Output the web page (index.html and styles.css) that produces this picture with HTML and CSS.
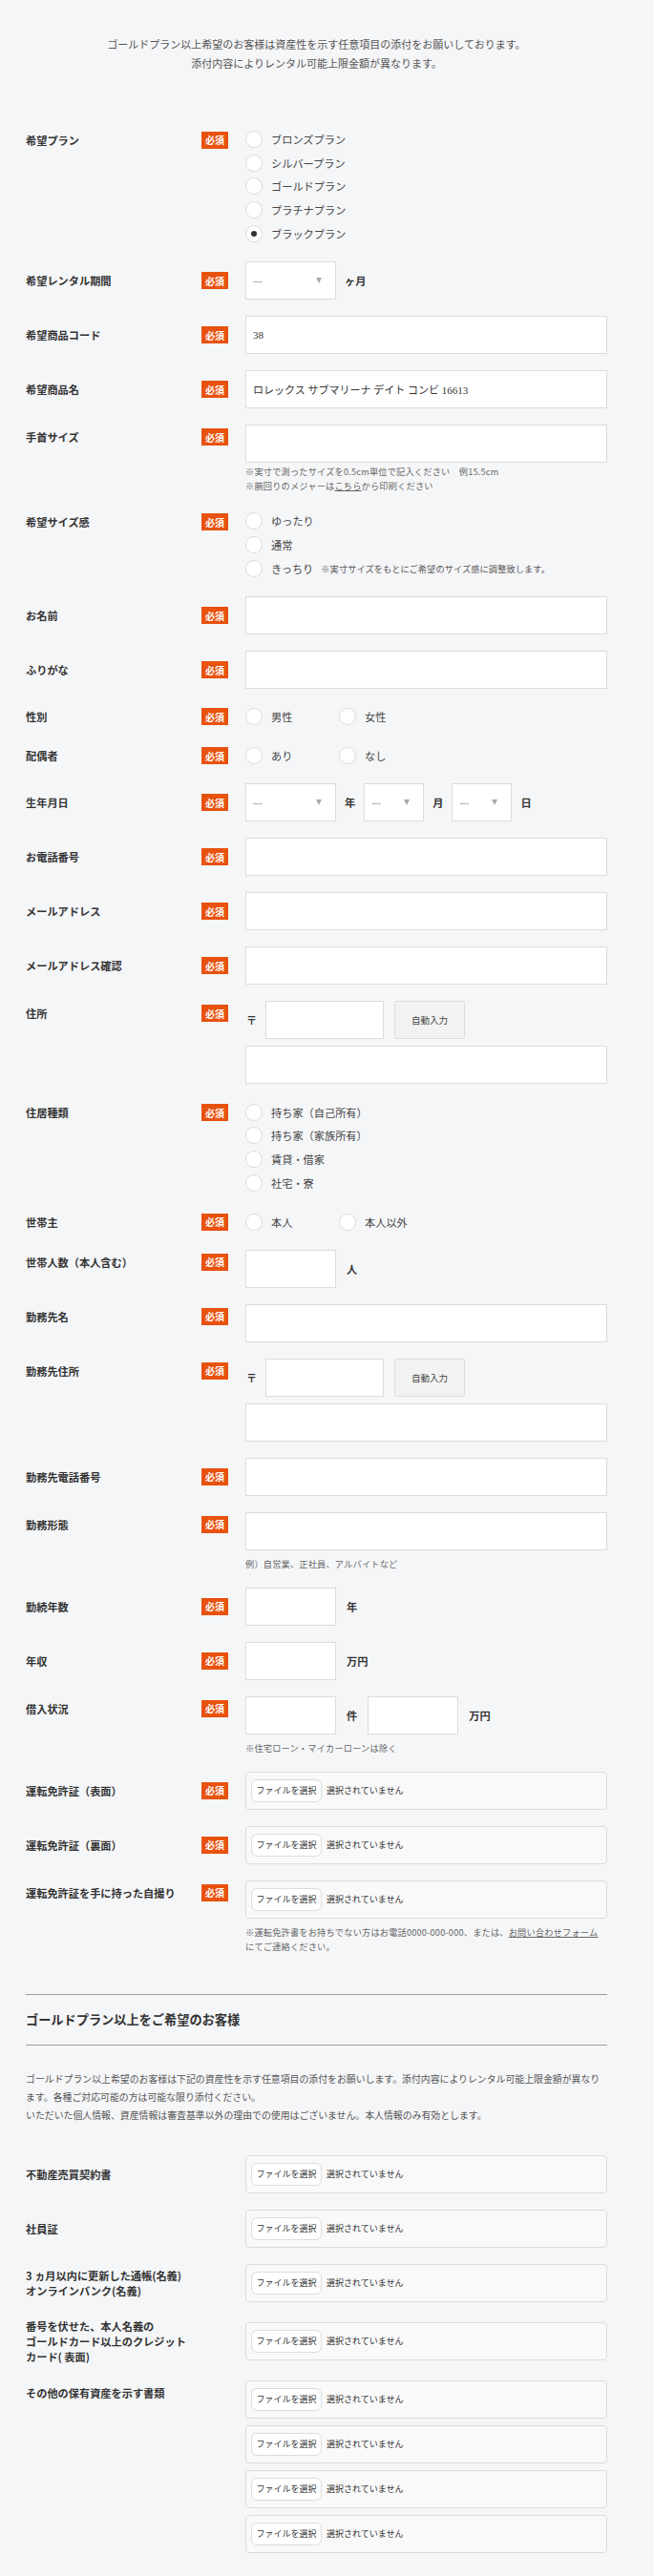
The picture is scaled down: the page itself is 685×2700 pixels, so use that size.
FILE: index.html
```html
<!DOCTYPE html>
<html lang="ja">
<head>
<meta charset="utf-8">
<title>申込フォーム</title>
<link rel="stylesheet" href="styles.css">
</head>
<body>
<div class="page">
  <p class="intro">ゴールドプラン以上希望のお客様は資産性を示す任意項目の添付をお願いしております。<br>添付内容によりレンタル可能上限金額が異なります。</p>

  <form class="form">
    <div class="row row--top">
      <div class="label">希望プラン</div>
      <span class="req">必須</span>
      <div class="radios">
        <label class="radio"><span class="circle"></span>ブロンズプラン</label>
        <label class="radio"><span class="circle"></span>シルバープラン</label>
        <label class="radio"><span class="circle"></span>ゴールドプラン</label>
        <label class="radio"><span class="circle"></span>プラチナプラン</label>
        <label class="radio"><span class="circle circle--on"></span>ブラックプラン</label>
      </div>
    </div>

    <div class="row">
      <div class="label">希望レンタル期間</div>
      <span class="req">必須</span>
      <div class="inline">
        <span class="select select--l"><select><option>---</option></select></span>
        <span class="unit">ヶ月</span>
      </div>
    </div>

    <div class="row">
      <div class="label">希望商品コード</div>
      <span class="req">必須</span>
      <input class="input" type="text" value="38">
    </div>

    <div class="row">
      <div class="label">希望商品名</div>
      <span class="req">必須</span>
      <input class="input" type="text" value="ロレックス サブマリーナ デイト コンビ 16613">
    </div>

    <div class="row row--top">
      <div class="label">手首サイズ</div>
      <span class="req">必須</span>
      <div class="field">
        <input class="input" type="text">
        <p class="note note--tight">※実寸で測ったサイズを0.5cm単位で記入ください　例15.5cm<br>※腕回りのメジャーは<a class="link" href="#">こちら</a>から印刷ください</p>
      </div>
    </div>

    <div class="row row--top">
      <div class="label">希望サイズ感</div>
      <span class="req">必須</span>
      <div class="radios">
        <label class="radio"><span class="circle"></span>ゆったり</label>
        <label class="radio"><span class="circle"></span>通常</label>
        <label class="radio"><span class="circle"></span>きっちり<span class="radio-note">※実寸サイズをもとにご希望のサイズ感に調整致します。</span></label>
      </div>
    </div>

    <div class="row">
      <div class="label">お名前</div>
      <span class="req">必須</span>
      <input class="input" type="text">
    </div>

    <div class="row">
      <div class="label">ふりがな</div>
      <span class="req">必須</span>
      <input class="input" type="text">
    </div>

    <div class="row">
      <div class="label">性別</div>
      <span class="req">必須</span>
      <div class="radios radios--inline">
        <label class="radio"><span class="circle"></span>男性</label>
        <label class="radio"><span class="circle"></span>女性</label>
      </div>
    </div>

    <div class="row">
      <div class="label">配偶者</div>
      <span class="req">必須</span>
      <div class="radios radios--inline">
        <label class="radio"><span class="circle"></span>あり</label>
        <label class="radio"><span class="circle"></span>なし</label>
      </div>
    </div>

    <div class="row">
      <div class="label">生年月日</div>
      <span class="req">必須</span>
      <div class="inline inline--date">
        <span class="select select--l"><select><option>---</option></select></span>
        <span class="unit">年</span>
        <span class="select select--s"><select><option>---</option></select></span>
        <span class="unit">月</span>
        <span class="select select--s"><select><option>---</option></select></span>
        <span class="unit">日</span>
      </div>
    </div>

    <div class="row">
      <div class="label">お電話番号</div>
      <span class="req">必須</span>
      <input class="input" type="text">
    </div>

    <div class="row">
      <div class="label">メールアドレス</div>
      <span class="req">必須</span>
      <input class="input" type="text">
    </div>

    <div class="row">
      <div class="label">メールアドレス確認</div>
      <span class="req">必須</span>
      <input class="input" type="text">
    </div>

    <div class="row row--top">
      <div class="label">住所</div>
      <span class="req">必須</span>
      <div class="field field--stack">
        <div class="postal">
          <span class="postal-mark">〒</span>
          <input class="input input--zip" type="text">
          <button class="auto-btn" type="button">自動入力</button>
        </div>
        <input class="input" type="text">
      </div>
    </div>

    <div class="row row--top">
      <div class="label">住居種類</div>
      <span class="req">必須</span>
      <div class="radios">
        <label class="radio"><span class="circle"></span>持ち家（自己所有）</label>
        <label class="radio"><span class="circle"></span>持ち家（家族所有）</label>
        <label class="radio"><span class="circle"></span>賃貸・借家</label>
        <label class="radio"><span class="circle"></span>社宅・寮</label>
      </div>
    </div>

    <div class="row">
      <div class="label">世帯主</div>
      <span class="req">必須</span>
      <div class="radios radios--inline">
        <label class="radio"><span class="circle"></span>本人</label>
        <label class="radio"><span class="circle"></span>本人以外</label>
      </div>
    </div>

    <div class="row row--top">
      <div class="label">世帯人数（本人含む）</div>
      <span class="req">必須</span>
      <div class="inline">
        <input class="input input--s" type="text">
        <span class="unit unit--wide">人</span>
      </div>
    </div>

    <div class="row row--top">
      <div class="label">勤務先名</div>
      <span class="req">必須</span>
      <input class="input" type="text">
    </div>

    <div class="row row--top">
      <div class="label">勤務先住所</div>
      <span class="req">必須</span>
      <div class="field field--stack">
        <div class="postal">
          <span class="postal-mark">〒</span>
          <input class="input input--zip" type="text">
          <button class="auto-btn" type="button">自動入力</button>
        </div>
        <input class="input" type="text">
      </div>
    </div>

    <div class="row">
      <div class="label">勤務先電話番号</div>
      <span class="req">必須</span>
      <input class="input" type="text">
    </div>

    <div class="row row--top">
      <div class="label">勤務形態</div>
      <span class="req">必須</span>
      <div class="field">
        <input class="input" type="text">
        <p class="note">例）自営業、正社員、アルバイトなど</p>
      </div>
    </div>

    <div class="row">
      <div class="label">勤続年数</div>
      <span class="req">必須</span>
      <div class="inline">
        <input class="input input--s" type="text">
        <span class="unit unit--wide">年</span>
      </div>
    </div>

    <div class="row">
      <div class="label">年収</div>
      <span class="req">必須</span>
      <div class="inline">
        <input class="input input--s" type="text">
        <span class="unit unit--wide">万円</span>
      </div>
    </div>

    <div class="row row--top">
      <div class="label">借入状況</div>
      <span class="req">必須</span>
      <div class="field">
        <div class="inline">
          <input class="input input--s" type="text">
          <span class="unit unit--wide">件</span>
          <input class="input input--s" type="text">
          <span class="unit unit--wide">万円</span>
        </div>
        <p class="note">※住宅ローン・マイカーローンは除く</p>
      </div>
    </div>

    <div class="row">
      <div class="label">運転免許証（表面）</div>
      <span class="req">必須</span>
      <label class="file"><span class="file-btn">ファイルを選択</span><span class="file-name">選択されていません</span></label>
    </div>

    <div class="row">
      <div class="label">運転免許証（裏面）</div>
      <span class="req">必須</span>
      <label class="file"><span class="file-btn">ファイルを選択</span><span class="file-name">選択されていません</span></label>
    </div>

    <div class="row row--top">
      <div class="label">運転免許証を手に持った自撮り</div>
      <span class="req">必須</span>
      <div class="field">
        <label class="file"><span class="file-btn">ファイルを選択</span><span class="file-name">選択されていません</span></label>
        <p class="note">※運転免許書をお持ちでない方はお電話0000-000-000、または、<a class="link" href="#">お問い合わせフォーム</a><br>にてご連絡ください。</p>
      </div>
    </div>

    <section class="gold">
      <h2 class="gold-title">ゴールドプラン以上をご希望のお客様</h2>
      <p class="gold-text">ゴールドプラン以上希望のお客様は下記の資産性を示す任意項目の添付をお願いします。添付内容によりレンタル可能上限金額が異なります。各種ご対応可能の方は可能な限り添付ください。<br>いただいた個人情報、資産情報は審査基準以外の理由での使用はございません。本人情報のみ有効とします。</p>

      <div class="row">
        <div class="label">不動産売買契約書</div>
        <span class="req-empty"></span>
        <label class="file"><span class="file-btn">ファイルを選択</span><span class="file-name">選択されていません</span></label>
      </div>

      <div class="row">
        <div class="label">社員証</div>
        <span class="req-empty"></span>
        <label class="file"><span class="file-btn">ファイルを選択</span><span class="file-name">選択されていません</span></label>
      </div>

      <div class="row">
        <div class="label label--multi">3 ヵ月以内に更新した通帳(名義)<br>オンラインバンク(名義)</div>
        <span class="req-empty"></span>
        <label class="file"><span class="file-btn">ファイルを選択</span><span class="file-name">選択されていません</span></label>
      </div>

      <div class="row">
        <div class="label label--multi">番号を伏せた、本人名義の<br>ゴールドカード以上のクレジット<br>カード( 表面)</div>
        <span class="req-empty"></span>
        <label class="file"><span class="file-btn">ファイルを選択</span><span class="file-name">選択されていません</span></label>
      </div>

      <div class="row row--top">
        <div class="label">その他の保有資産を示す書類</div>
        <span class="req-empty"></span>
        <div class="files">
          <label class="file"><span class="file-btn">ファイルを選択</span><span class="file-name">選択されていません</span></label>
          <label class="file"><span class="file-btn">ファイルを選択</span><span class="file-name">選択されていません</span></label>
          <label class="file"><span class="file-btn">ファイルを選択</span><span class="file-name">選択されていません</span></label>
          <label class="file"><span class="file-btn">ファイルを選択</span><span class="file-name">選択されていません</span></label>
        </div>
      </div>
    </section>
  </form>
</div>
</body>
</html>
```

FILE: styles.css
```css
* {
  box-sizing: border-box;
}

body {
  margin: 0;
  background: #f5f6f8;
  font-family: "Noto Sans CJK JP", "Noto Sans", sans-serif;
  color: #333;
}

.page {
  width: 609px;
  margin-left: 27px;
  padding: 36px 0 24px;
}

.intro {
  margin: 0;
  text-align: center;
  font-size: 11px;
  line-height: 20px;
  color: #555;
}

.form {
  margin-top: 57.7px;
}

.row {
  display: grid;
  grid-template-columns: 184px 46px 379px;
  align-items: center;
  margin-bottom: 17px;
}

.row--top {
  align-items: start;
}

.label {
  font-size: 11.2px;
  font-weight: 700;
  line-height: 18px;
  color: #333;
}

.label--multi {
  line-height: 16px;
}

.row--top .label,
.row--top .req {
  margin-top: 4px;
}

.req {
  width: 28px;
  height: 18px;
  background: #e8520f;
  color: #fff;
  font-size: 10px;
  font-weight: 700;
  display: flex;
  align-items: center;
  justify-content: center;
}

/* radios */
.radios {
  display: flex;
  flex-direction: column;
}

.radios--inline {
  flex-direction: row;
}

.radio {
  display: flex;
  align-items: center;
  height: 24.7px;
  font-size: 11.2px;
  color: #444;
  white-space: nowrap;
}

.radios--inline .radio {
  width: 98px;
  height: 24px;
}

.circle {
  flex: none;
  width: 18px;
  height: 18px;
  margin-right: 9px;
  border: 1px solid #dcdcdc;
  border-radius: 50%;
  background: #fff;
  display: flex;
  align-items: center;
  justify-content: center;
}

.circle--on::after {
  content: "";
  width: 6px;
  height: 6px;
  border-radius: 50%;
  background: #333;
}

.radio-note {
  margin-left: 8px;
  font-size: 9.2px;
  letter-spacing: 0.1px;
  color: #555;
}

/* inputs */
.input {
  display: block;
  width: 100%;
  height: 40px;
  margin: 0;
  padding: 0 7px;
  border: 1px solid #dcdcdc;
  border-radius: 0;
  background: #fff;
  font-family: "Liberation Serif", "Noto Sans CJK JP", serif;
  font-size: 11px;
  color: #333;
}

.input--s {
  width: 95px;
  flex: none;
}

.input--zip {
  width: 124px;
  flex: none;
}

.field {
  display: flex;
  flex-direction: column;
}

.field--stack {
  gap: 7px;
}

.inline {
  display: flex;
  align-items: center;
}

.inline--date {
  gap: 9px;
}

.unit {
  margin-left: 9px;
  font-size: 11.2px;
  font-weight: 700;
  color: #333;
}

.inline--date .unit {
  margin-left: 0;
}

.unit--wide {
  margin-left: 11px;
  margin-right: 11px;
}

/* select */
.select {
  position: relative;
  display: block;
  height: 40px;
  flex: none;
}

.select--l {
  width: 95px;
}

.select--s {
  width: 63px;
}

.select select {
  appearance: none;
  -webkit-appearance: none;
  width: 100%;
  height: 100%;
  margin: 0;
  padding: 0 7px;
  border: 1px solid #dcdcdc;
  border-radius: 0;
  background: #fff;
  font-family: "Noto Sans CJK JP", sans-serif;
  font-size: 9px;
  color: #666;
}

.select::after {
  content: "";
  position: absolute;
  right: 15px;
  top: 17px;
  border-left: 3px solid transparent;
  border-right: 3px solid transparent;
  border-top: 6px solid #aaa;
  pointer-events: none;
}

/* postal */
.postal {
  display: flex;
  align-items: center;
}

.postal-mark {
  width: 21px;
  padding-left: 1px;
  font-size: 11px;
  font-weight: 700;
  color: #333;
}

.auto-btn {
  width: 74px;
  height: 40px;
  margin-left: 11px;
  border: 1px solid #dcdcdc;
  border-radius: 2px;
  background: #f2f2f2;
  font-family: "Noto Sans CJK JP", sans-serif;
  font-size: 9.5px;
  color: #444;
}

/* notes */
.note {
  margin: 7px 0 0;
  font-size: 9.2px;
  line-height: 15px;
  letter-spacing: 0.2px;
  color: #666;
}

.note--tight {
  margin-top: 2px;
}

.link {
  color: #666;
  text-decoration: underline;
}

/* file */
.file {
  display: flex;
  align-items: center;
  height: 40px;
  padding: 0 5px;
  border: 1px solid #dcdcdc;
  border-radius: 4px;
  background: #f9f9f9;
  font-size: 9px;
  color: #333;
}

.file-btn {
  width: 74px;
  height: 24px;
  margin-right: 5px;
  border: 1px solid #dcdcdc;
  border-radius: 6px;
  background: #fff;
  display: flex;
  align-items: center;
  justify-content: center;
}

.files {
  display: flex;
  flex-direction: column;
  gap: 7px;
}

/* gold section */
.gold {
  margin-top: 42px;
}

.gold-title {
  margin: 0;
  padding: 16px 0;
  border-top: 1px solid #9e9e9e;
  border-bottom: 1px solid #9e9e9e;
  font-size: 13.2px;
  line-height: 20px;
  font-weight: 700;
  color: #333;
}

.gold-text {
  margin: 26.5px 0 31.5px;
  font-size: 9.9px;
  line-height: 19px;
  color: #555;
}
```
